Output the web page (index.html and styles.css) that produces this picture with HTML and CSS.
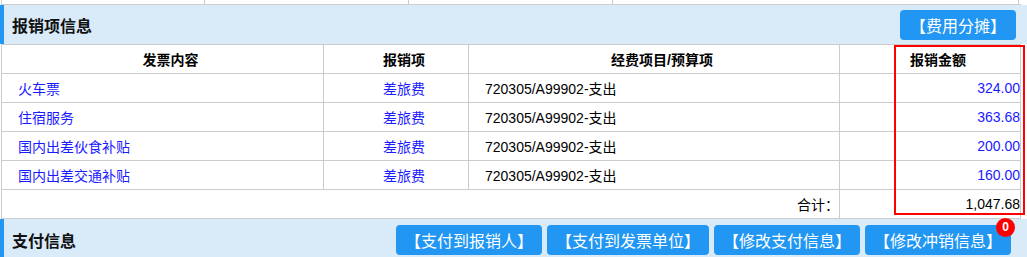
FILE: index.html
```html
<!DOCTYPE html>
<html lang="zh-CN">
<head>
  <meta charset="UTF-8" />
  <title>报销项信息</title>
  <link rel="stylesheet" href="styles.css">
</head>
<body>
  <!-- tail of the table above -->
  <div class="prev-row">
    <span></span><span></span><span></span><span></span>
  </div>

  <div class="bar">
    <h2>报销项信息</h2>
    <button class="btn">【费用分摊】</button>
  </div>

  <div class="grid-wrap">
    <table class="items">
      <colgroup>
        <col style="width:322px">
        <col style="width:145px">
        <col style="width:371px">
        <col style="width:181px">
      </colgroup>
      <thead>
        <tr>
          <th>发票内容</th>
          <th>报销项</th>
          <th>经费项目/预算项</th>
          <th>报销金额</th>
        </tr>
      </thead>
      <tbody>
        <tr>
          <td class="link">火车票</td>
          <td class="link center">差旅费</td>
          <td>720305/A99902-支出</td>
          <td class="link num">324.00</td>
        </tr>
        <tr>
          <td class="link">住宿服务</td>
          <td class="link center">差旅费</td>
          <td>720305/A99902-支出</td>
          <td class="link num">363.68</td>
        </tr>
        <tr>
          <td class="link">国内出差伙食补贴</td>
          <td class="link center">差旅费</td>
          <td>720305/A99902-支出</td>
          <td class="link num">200.00</td>
        </tr>
        <tr>
          <td class="link">国内出差交通补贴</td>
          <td class="link center">差旅费</td>
          <td>720305/A99902-支出</td>
          <td class="link num">160.00</td>
        </tr>
        <tr>
          <td colspan="3" class="num">合计：</td>
          <td class="num">1,047.68</td>
        </tr>
      </tbody>
    </table>
    <div class="mark"></div>
  </div>

  <div class="bar pay">
    <h2>支付信息</h2>
    <div class="actions">
      <button class="btn">【支付到报销人】</button>
      <button class="btn">【支付到发票单位】</button>
      <button class="btn">【修改支付信息】</button>
      <button class="btn has-badge">【修改冲销信息】<span class="badge">0</span></button>
    </div>
  </div>
</body>
</html>
```

FILE: styles.css
```css
body {
  margin: 0;
  font-family: "Liberation Sans", "Noto Sans CJK SC", sans-serif;
  color: #000;
  background: #fff;
  width: 1027px;
  overflow: hidden;
}

.prev-row {
  display: flex;
  height: 4px;
  border-bottom: 1px solid #ccc;
  margin-left: 1px;
  width: 1019px;
  border-left: 1px solid #ccc;
}
.prev-row span {
  flex: 0 0 204px;
  border-right: 1px solid #ccc;
  box-sizing: border-box;
}
.prev-row span:first-child {
  flex-basis: 203px;
}
.prev-row span:last-child {
  flex-basis: 406px;
}

.bar {
  display: flex;
  align-items: center;
  justify-content: space-between;
  height: 39px;
  background: #d9eaf8;
  border-left: 4px solid #2196f3;
  padding: 0 11px 0 8px;
}
.bar h2 {
  margin: 0;
  font-size: 16px;
  font-weight: bold;
  color: #111;
}

.btn {
  position: relative;
  height: 30px;
  padding: 0 10px;
  border: none;
  border-radius: 4px;
  background: #2196f3;
  color: #fff;
  font-family: inherit;
  font-size: 16px;
  cursor: pointer;
}

.grid-wrap {
  position: relative;
  padding-left: 1px;
}
.items {
  border-collapse: collapse;
  table-layout: fixed;
  width: 1019px;
  font-size: 14px;
}
.items th,
.items td {
  height: 28px;
  padding: 0 0 0 16px;
  border: 1px solid #ccc;
  white-space: nowrap;
}
.items th {
  font-weight: bold;
  text-align: center;
}
.items .center {
  text-align: center;
}
.items .num {
  text-align: right;
}
.items .link {
  color: #1a1aff;
}

/* highlight round the amount column */
.mark {
  position: absolute;
  left: 894px;
  top: 1px;
  width: 127px;
  height: 166px;
  border: 2px solid #f00;
  pointer-events: none;
}

.pay {
  height: 41px;
  padding-top: 1px;
  box-sizing: border-box;
  padding-right: 16px;
}
.actions {
  display: flex;
  gap: 5px;
}
.actions .btn {
  padding: 0 9px;
}
.badge {
  position: absolute;
  right: -4px;
  top: -7px;
  width: 19px;
  height: 19px;
  border-radius: 50%;
  background: #f00;
  color: #fff;
  font-size: 12px;
  font-weight: bold;
  line-height: 19px;
  text-align: center;
}
```
